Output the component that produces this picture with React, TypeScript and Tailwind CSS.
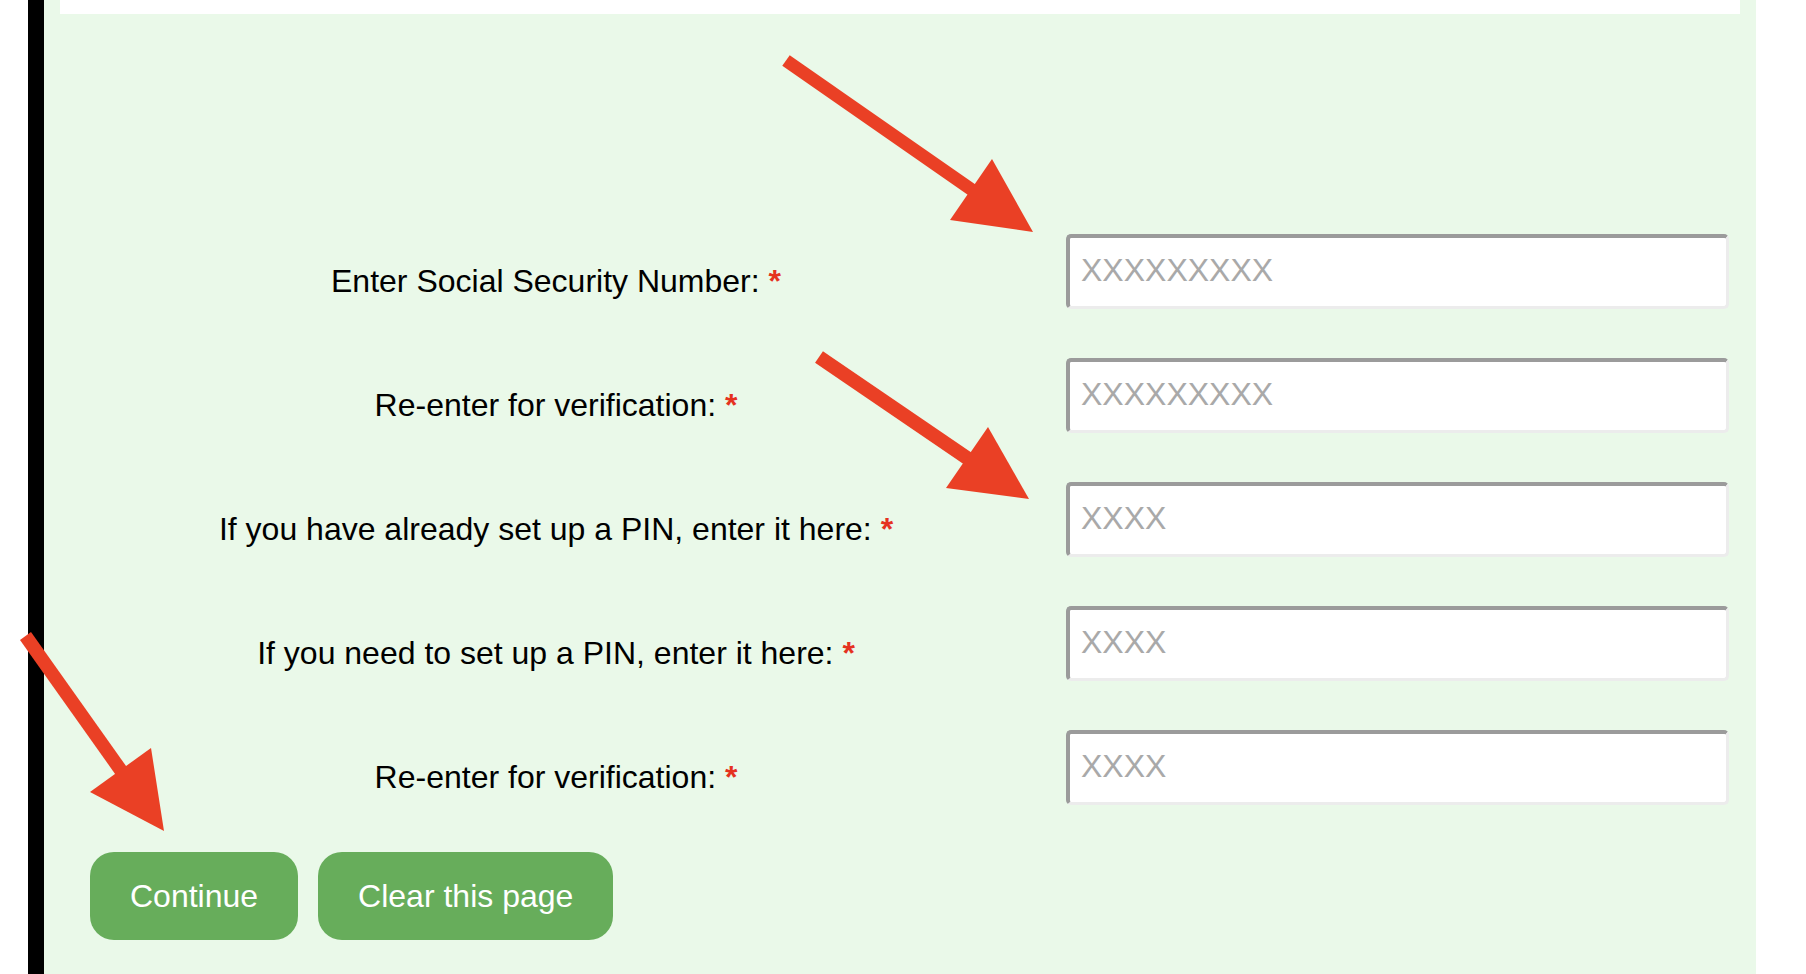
import React from 'react';

const font = { fontFamily: '"Liberation Sans", Arial, Helvetica, sans-serif' };

const fields = [
    { label: 'Enter Social Security Number:', placeholder: 'XXXXXXXXX' },
    { label: 'Re-enter for verification:', placeholder: 'XXXXXXXXX' },
    { label: 'If you have already set up a PIN, enter it here:', placeholder: 'XXXX' },
    { label: 'If you need to set up a PIN, enter it here:', placeholder: 'XXXX' },
    { label: 'Re-enter for verification:', placeholder: 'XXXX' },
];

// annotation arrows drawn on top of the page
function Arrows() {
    const red = '#ea4025';
    return (
        <svg
            className="absolute inset-0 pointer-events-none"
            width={1806}
            height={974}
            viewBox="0 0 1806 974"
        >
            <line x1={786} y1={60.5} x2={975} y2={192} stroke={red} strokeWidth={13} />
            <polygon points="992,159 950,220 1033,232" fill={red} />

            <line x1={819} y1={357} x2={970} y2={460} stroke={red} strokeWidth={14} />
            <polygon points="988,427 946,488 1029,499" fill={red} />

            <line x1={25.5} y1={636} x2={122} y2={772} stroke={red} strokeWidth={13.5} />
            <polygon points="151,748 90,792 164,831" fill={red} />
        </svg>
    );
}

export default function App() {
    return (
        <div className="relative w-full h-[974px] bg-white overflow-hidden flex" style={font}>
            <div className="w-[28px] shrink-0" />
            <div className="w-4 shrink-0 bg-black" />
            <div className="w-[1712px] shrink-0 bg-[#eaf9e9] px-4">
                <div className="h-[14px] bg-white" />

                <div className="mt-[220px] flex flex-col gap-[49px]">
                    {fields.map((f, i) => (
                        <div key={i} className="flex items-center h-[75px]">
                            <label className="w-[992px] shrink-0 text-center text-[32px] leading-[37px] text-black pt-[20px]">
                                {f.label}{' '}
                                <span className="text-[#e5321f] font-bold">*</span>
                            </label>
                            <input
                                type="text"
                                placeholder={f.placeholder}
                                className="ml-[14px] w-[663px] h-[75px] bg-white rounded-[5px] border-solid border-t-4 border-l-4 border-r-[3px] border-b-[3px] border-t-[#9b9b9b] border-l-[#9b9b9b] border-r-[#ececec] border-b-[#ececec] pl-[11px] pb-[4px] text-[32px] text-black placeholder:text-[#a9a9a9] outline-none"
                            />
                        </div>
                    ))}
                </div>

                <div className="mt-[47px] ml-[30px] flex gap-5">
                    <button className="h-[88px] px-10 rounded-[24px] bg-[#67ad5b] text-white text-[32px]">
                        Continue
                    </button>
                    <button className="h-[88px] px-10 rounded-[24px] bg-[#67ad5b] text-white text-[32px]">
                        Clear this page
                    </button>
                </div>
            </div>

            <Arrows />
        </div>
    );
}
